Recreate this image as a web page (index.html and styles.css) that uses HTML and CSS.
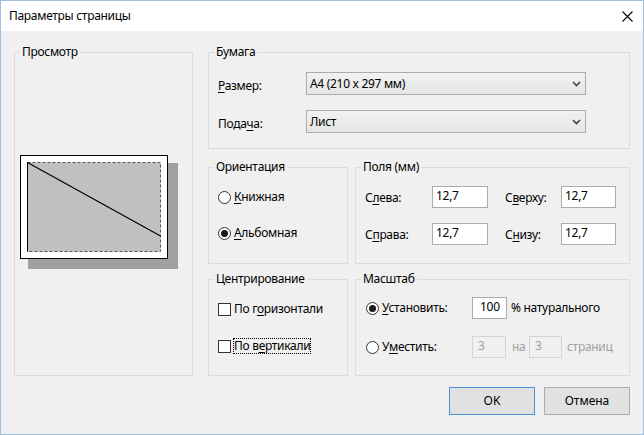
FILE: index.html
```html
<!DOCTYPE html>
<html lang="ru">
<head>
<meta charset="utf-8">
<title>Параметры страницы</title>
<link rel="stylesheet" href="styles.css">
</head>
<body>
<div class="window">
  <div class="titlebar">
    <span class="title">Параметры страницы</span>
    <svg class="close" width="11" height="11" viewBox="0 0 11 11"><path d="M0.5 0.5 L10.5 10.5 M10.5 0.5 L0.5 10.5" stroke="#000" stroke-width="1.1" fill="none"/></svg>
  </div>
  <div class="content">
    <div class="main">
      <div class="group preview-group">
        <span class="gt">Просмотр</span>
        <svg class="preview" width="160" height="116" viewBox="0 0 160 116">
          <rect x="8" y="8" width="150" height="106" fill="#a0a0a0"/>
          <rect x="0.5" y="0.5" width="147" height="103" fill="#fff" stroke="#000"/>
          <path d="M147.5 1 V104 M1 103.5 H148" stroke="#000" stroke-width="1"/>
          <rect x="7.5" y="7.5" width="133" height="89" fill="#c0c0c0" stroke="#555" stroke-dasharray="3 2"/>
          <path d="M7.5 7.5 V96.5" stroke="#000"/>
          <path d="M7.5 7.5 L140.5 81" stroke="#000" stroke-width="1.2"/>
        </svg>
      </div>
      <div class="right">
        <div class="group paper">
          <span class="gt">Бумага</span>
          <div class="paper-grid">
            <span class="lbl"><u>Р</u>азмер:</span>
            <div class="select"><span>A4 (210 x 297 мм)</span><svg width="9" height="6" viewBox="0 0 9 6"><path d="M1 1 L4.5 4.5 L8 1" stroke="#444" stroke-width="1.6" fill="none"/></svg></div>
            <span class="lbl">Пода<u>ч</u>а:</span>
            <div class="select"><span>Лист</span><svg width="9" height="6" viewBox="0 0 9 6"><path d="M1 1 L4.5 4.5 L8 1" stroke="#444" stroke-width="1.6" fill="none"/></svg></div>
          </div>
        </div>
        <div class="row row2">
          <div class="group narrow orient">
            <span class="gt">Ориентация</span>
            <div class="opt"><span class="radio"></span><span><u>К</u>нижная</span></div>
            <div class="opt second"><span class="radio on"></span><span><u>А</u>льбомная</span></div>
          </div>
          <div class="group wide margins">
            <span class="gt">Поля (мм)</span>
            <div class="margin-grid">
              <span class="lbl">С<u>л</u>ева:</span>
              <span class="edit">12,7</span>
              <span></span>
              <span class="lbl">С<u>в</u>ерху:</span>
              <span class="edit">12,7</span>
              <span class="lbl">С<u>п</u>рава:</span>
              <span class="edit">12,7</span>
              <span></span>
              <span class="lbl">С<u>н</u>изу:</span>
              <span class="edit">12,7</span>
            </div>
          </div>
        </div>
        <div class="row row3">
          <div class="group narrow centering">
            <span class="gt">Центрирование</span>
            <div class="opt cb"><span class="check"></span><span class="cb-label">По г<u>о</u>ризонтали</span></div>
            <div class="opt cb second2"><span class="check"></span><span class="cb-label focus">По в<u>е</u>ртикали</span></div>
          </div>
          <div class="group wide scale">
            <span class="gt">Масштаб</span>
            <div class="scale-row">
              <div class="opt radio-cell"><span class="radio on"></span><span><u>У</u>становить:</span></div>
              <span class="edit pct">100</span>
              <span class="after">% натурального</span>
            </div>
            <div class="scale-row second">
              <div class="opt radio-cell"><span class="radio"></span><span>У<u>м</u>естить:</span></div>
              <span class="edit dis w1">3</span>
              <span class="dis-text na">на</span>
              <span class="edit dis w2">3</span>
              <span class="dis-text pages">страниц</span>
            </div>
          </div>
        </div>
      </div>
    </div>
    <div class="buttons">
      <button class="btn default">OK</button>
      <button class="btn">Отмена</button>
    </div>
  </div>
</div>
</body>
</html>
```
FILE: styles.css
```css
* { box-sizing: border-box; }
html, body { margin: 0; padding: 0; }
body {
  width: 644px;
  height: 435px;
  overflow: hidden;
  background: #fff;
  color: #000;
  font-family: "Noto Sans", "Segoe UI", "Liberation Sans", sans-serif;
  font-size: 12px;
  line-height: 16px;
  letter-spacing: -0.3px;
}
u { text-decoration: underline; text-underline-offset: 2px; }

.window {
  width: 644px;
  height: 435px;
  border: 1px solid #9fbfe0;
  background: #f0f0f0;
  display: flex;
  flex-direction: column;
}
.titlebar {
  flex: none;
  height: 30px;
  background: #fff;
  display: flex;
  align-items: center;
  justify-content: space-between;
  padding: 0 10px 0 8px;
}
.title { font-size: 12px; }
.close { display: block; }

.content { padding: 21px 13px 0 13px; }
.main { display: flex; gap: 15px; height: 324px; }

.group {
  position: relative;
  border: 1px solid #dcdcdc;
}
.gt {
  position: absolute;
  top: -9px;
  left: 5px;
  padding: 0 2px;
  background: #f0f0f0;
  white-space: nowrap;
}

.preview-group { width: 179px; height: 324px; padding: 102px 0 0 5px; }
.preview { display: block; }

.right { width: 422px; display: flex; flex-direction: column; }
.paper { height: 97px; padding: 19px 0 0 9px; }
.paper-grid {
  display: grid;
  grid-template-columns: 88px 280px;
  grid-auto-rows: 23px;
  row-gap: 15px;
  align-items: center;
}
.select {
  height: 23px;
  border: 1px solid #acacac;
  background: linear-gradient(#f2f2f2, #e5e5e5);
  display: flex;
  align-items: center;
  justify-content: space-between;
  padding: 0 4px 0 3px;
}
.select svg { display: block; }

.row { display: flex; gap: 7px; height: 97px; }
.row2 { margin-top: 18px; }
.row3 { margin-top: 15px; }
.narrow { width: 140px; }
.wide { width: 275px; }

.orient, .centering { padding: 21px 0 0 9px; }
.opt { display: flex; align-items: center; gap: 3px; height: 16px; white-space: nowrap; }
.orient .second { margin-top: 20px; }
.radio {
  flex: none;
  width: 13px;
  height: 13px;
  border: 1px solid #333;
  border-radius: 50%;
  background: #fff;
  display: flex;
  align-items: center;
  justify-content: center;
}
.radio.on::after {
  content: "";
  width: 7px;
  height: 7px;
  border-radius: 50%;
  background: #1a1a1a;
}
.check {
  flex: none;
  width: 13px;
  height: 13px;
  border: 1px solid #333;
  background: #fff;
}
.opt.cb { gap: 2px; }
.cb-label { padding: 0 1px; height: 16px; }
.focus { outline: 1px dotted #000; outline-offset: -1px; }
.centering .second2 { margin-top: 21px; }

.margins { padding: 18px 0 0 9px; }
.margin-grid {
  display: grid;
  grid-template-columns: 67px 56px 17px 56px 55px;
  grid-auto-rows: 22px;
  row-gap: 15px;
}
.lbl { padding-top: 4px; white-space: nowrap; }
.edit {
  height: 22px;
  border: 1px solid #abadb3;
  background: #fff;
  padding: 0 0 0 3px;
  line-height: 17px;
}

.scale { padding: 17px 0 0 10px; }
.scale-row { display: flex; align-items: center; height: 22px; }
.scale-row.second { margin-top: 17px; }
.radio-cell { width: 106px; }
.edit.pct { width: 35px; padding-left: 7px; }
.after { margin-left: 4px; }
.edit.dis {
  background: #f0f0f0;
  border-color: #d4d4d4;
  color: #a0a0a0;
  padding-left: 5px;
}
.w1 { width: 34px; }
.w2 { width: 33px; }
.dis-text { color: #a0a0a0; }
.na { margin-left: 6px; width: 17px; }
.pages { margin-left: 5px; }

.buttons {
  margin-top: 11px;
  display: flex;
  justify-content: flex-end;
  gap: 9px;
}
.btn {
  width: 86px;
  height: 28px;
  font: inherit;
  color: #000;
  background: #e1e1e1;
  border: 1px solid #adadad;
  padding: 0;
}
.btn.default { border-color: #4a8fd4; }
```
